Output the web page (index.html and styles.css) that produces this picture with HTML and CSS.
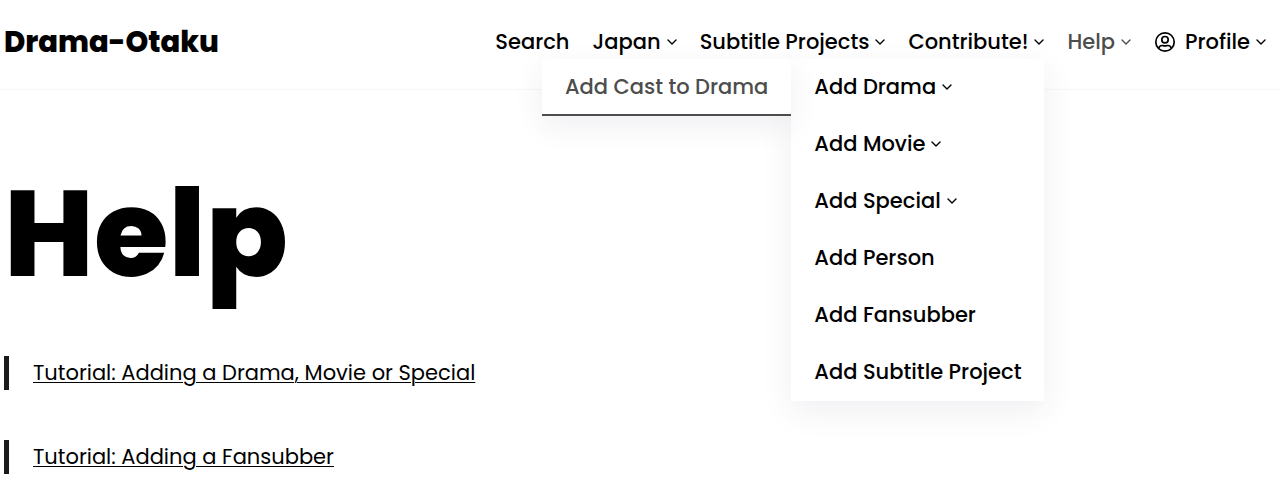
FILE: index.html
```
<!DOCTYPE html>
<html lang="en">
<head>
    <meta charset="UTF-8">
    <meta name="viewport" content="width=device-width, initial-scale=1.0">
    <title>Help - Drama-Otaku</title>
    <link rel="stylesheet" href="styles.css">
</head>
<body>
    <svg class="sprite" aria-hidden="true">
        <symbol id="chevron" viewBox="0 0 10 6">
            <path d="M1 1l4 4 4-4" fill="none" stroke="currentColor" stroke-width="1.4" stroke-linecap="round" stroke-linejoin="round"/>
        </symbol>
    </svg>

    <header class="site-header">
        <a class="logo" href="/">Drama-Otaku</a>

        <nav class="main-nav">
            <ul class="nav-list">
                <li><a class="nav-link" href="/search">Search</a></li>
                <li><a class="nav-link" href="/japan">Japan <svg class="chevron"><use href="#chevron"/></svg></a></li>
                <li><a class="nav-link" href="/subtitle-projects">Subtitle Projects <svg class="chevron"><use href="#chevron"/></svg></a></li>
                <li class="has-menu">
                    <a class="nav-link" href="/contribute">Contribute! <svg class="chevron"><use href="#chevron"/></svg></a>
                    <ul class="dropdown">
                        <li class="has-menu">
                            <a class="menu-link" href="/add/drama">Add Drama <svg class="chevron"><use href="#chevron"/></svg></a>
                            <ul class="dropdown submenu">
                                <li><a class="menu-link active" href="/add/cast">Add Cast to Drama</a></li>
                            </ul>
                        </li>
                        <li><a class="menu-link" href="/add/movie">Add Movie <svg class="chevron"><use href="#chevron"/></svg></a></li>
                        <li><a class="menu-link" href="/add/special">Add Special <svg class="chevron"><use href="#chevron"/></svg></a></li>
                        <li><a class="menu-link" href="/add/person">Add Person</a></li>
                        <li><a class="menu-link" href="/add/fansubber">Add Fansubber</a></li>
                        <li><a class="menu-link" href="/add/subtitle-project">Add Subtitle Project</a></li>
                    </ul>
                </li>
                <li><a class="nav-link current" href="/help">Help <svg class="chevron"><use href="#chevron"/></svg></a></li>
                <li>
                    <a class="nav-link" href="/profile">
                        <svg class="user-icon" viewBox="0 0 22 22" fill="none" stroke="currentColor" stroke-width="1.7" aria-hidden="true">
                            <circle cx="11" cy="11" r="9.2"/>
                            <circle cx="11" cy="8.7" r="3.2"/>
                            <path d="M4.8 17.4c.3-2 1.6-2.9 3.3-2.9.8 0 1.4.4 2.9.4s2.1-.4 2.9-.4c1.7 0 3 .9 3.3 2.9"/>
                        </svg>
                        Profile <svg class="chevron"><use href="#chevron"/></svg>
                    </a>
                </li>
            </ul>
        </nav>
    </header>

    <main class="content">
        <h1>Help</h1>
        <blockquote><a href="/help/adding-a-drama">Tutorial: Adding a Drama, Movie or Special</a></blockquote>
        <blockquote><a href="/help/adding-a-fansubber">Tutorial: Adding a Fansubber</a></blockquote>
    </main>
</body>
</html>
```
FILE: styles.css
```
* {
    margin: 0;
    padding: 0;
    box-sizing: border-box;
}

body {
    font-family: Poppins, Inter, sans-serif;
    font-size: 21px;
    line-height: 34px;
    color: #000;
    background: #fff;
}

a {
    color: inherit;
}

ul {
    list-style: none;
}

.sprite {
    display: none;
}

.site-header {
    display: flex;
    align-items: center;
    justify-content: space-between;
    min-height: 90px;
    padding: 0 14px 6px 4px;
    border-bottom: 1px solid #f7f7f7;
}

.logo {
    font-size: 29px;
    font-weight: 800;
    text-decoration: none;
}

.nav-list {
    display: flex;
    gap: 23px;
}

.nav-link,
.menu-link {
    display: flex;
    align-items: center;
    gap: 6px;
    font-weight: 500;
    text-decoration: none;
    white-space: nowrap;
}

.nav-link:hover,
.menu-link:hover,
.current,
.active {
    color: #4d4d4d;
}

.chevron {
    width: 10px;
    height: 6px;
    flex-shrink: 0;
}

.user-icon {
    width: 22px;
    height: 22px;
    margin-right: 3px;
}

/* Dropdown menus */
.has-menu {
    position: relative;
}

.dropdown {
    position: absolute;
    top: 100%;
    right: 0;
    z-index: 10;
    background: #fff;
    box-shadow: 0 10px 30px rgba(45, 45, 85, 0.08);
}

.menu-link {
    min-height: 57px;
    padding: 0 23px;
}

.submenu {
    top: 0;
    right: 100%;
    z-index: -1;
}

.submenu .active {
    box-shadow: inset 0 -2px #4d4d4d;
}

/* Page content */
.content {
    padding: 76px 4px 0;
}

h1 {
    font-size: 121px;
    font-weight: 800;
    line-height: 136px;
    margin-bottom: 54px;
}

blockquote {
    padding-left: 24px;
    border-left: 5px solid #1a1a1a;
    margin-bottom: 50px;
}

blockquote a {
    text-decoration-thickness: 1px;
    text-underline-offset: 2px;
}

@media (max-width: 900px) {
    .site-header,
    .nav-list {
        flex-wrap: wrap;
    }
}
```
